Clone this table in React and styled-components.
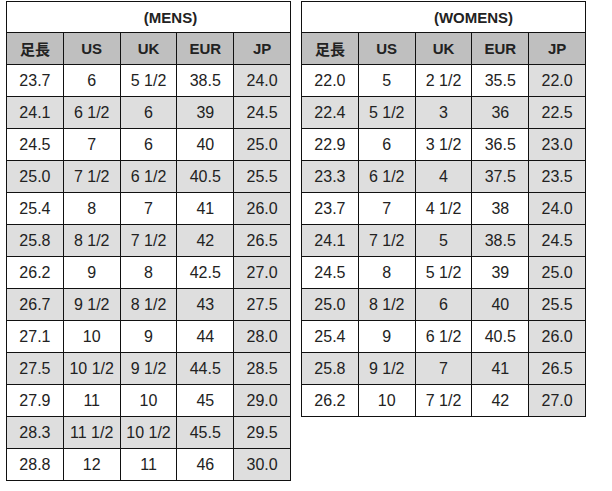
import React from "react";
import styled, { createGlobalStyle } from "styled-components";

const GlobalStyle = createGlobalStyle`
  body {
    margin: 0;
    background: #fff;
    font-family: "Liberation Sans", "Noto Sans CJK JP", sans-serif;
    color: #222;
  }
`;

const Page = styled.div`
  display: flex;
  align-items: flex-start;
  gap: 10px;
  padding: 1px 0 0 6px;
`;

const Table = styled.table`
  border-collapse: collapse;
  table-layout: fixed;
  width: 285px;
  font-size: 16px;
`;

const TitleCell = styled.th`
  height: 30px;
  border: 1px solid #111;
  background: #fff;
  font-size: 15px;
  font-weight: bold;
  text-align: center;
  padding: 0 0 0 ${(p) => p.$shift}px;
`;

const HeadCell = styled.th`
  height: 31px;
  border: 1px solid #111;
  background: #bfbfbf;
  font-size: 15px;
  font-weight: bold;
  text-align: center;
  padding: 0;
`;

const Cell = styled.td`
  height: 31px;
  border: 1px solid #111;
  background: ${(p) => (p.$shade ? "#dedede" : "#fff")};
  text-align: center;
  padding: 0;
  white-space: nowrap;
`;

const heads = ["足長", "US", "UK", "EUR", "JP"];

const mens = [
  ["23.7", "6", "5 1/2", "38.5", "24.0"],
  ["24.1", "6 1/2", "6", "39", "24.5"],
  ["24.5", "7", "6", "40", "25.0"],
  ["25.0", "7 1/2", "6 1/2", "40.5", "25.5"],
  ["25.4", "8", "7", "41", "26.0"],
  ["25.8", "8 1/2", "7 1/2", "42", "26.5"],
  ["26.2", "9", "8", "42.5", "27.0"],
  ["26.7", "9 1/2", "8 1/2", "43", "27.5"],
  ["27.1", "10", "9", "44", "28.0"],
  ["27.5", "10 1/2", "9 1/2", "44.5", "28.5"],
  ["27.9", "11", "10", "45", "29.0"],
  ["28.3", "11 1/2", "10 1/2", "45.5", "29.5"],
  ["28.8", "12", "11", "46", "30.0"],
];

const womens = [
  ["22.0", "5", "2 1/2", "35.5", "22.0"],
  ["22.4", "5 1/2", "3", "36", "22.5"],
  ["22.9", "6", "3 1/2", "36.5", "23.0"],
  ["23.3", "6 1/2", "4", "37.5", "23.5"],
  ["23.7", "7", "4 1/2", "38", "24.0"],
  ["24.1", "7 1/2", "5", "38.5", "24.5"],
  ["24.5", "8", "5 1/2", "39", "25.0"],
  ["25.0", "8 1/2", "6", "40", "25.5"],
  ["25.4", "9", "6 1/2", "40.5", "26.0"],
  ["25.8", "9 1/2", "7", "41", "26.5"],
  ["26.2", "10", "7 1/2", "42", "27.0"],
];

const SizeTable = ({ title, shift, rows }) => (
  <Table>
    <thead>
      <tr>
        <TitleCell colSpan={5} $shift={shift}>
          {title}
        </TitleCell>
      </tr>
      <tr>
        {heads.map((h) => (
          <HeadCell key={h}>{h}</HeadCell>
        ))}
      </tr>
    </thead>
    <tbody>
      {rows.map((row, i) => (
        <tr key={i}>
          {row.map((v, j) => (
            <Cell key={j} $shade={i % 2 === 1 || j === 4}>
              {v}
            </Cell>
          ))}
        </tr>
      ))}
    </tbody>
  </Table>
);

export default function App() {
  return (
    <>
      <GlobalStyle />
      <Page>
        <SizeTable title="(MENS)" shift={44} rows={mens} />
        <SizeTable title="(WOMENS)" shift={60} rows={womens} />
      </Page>
    </>
  );
}
